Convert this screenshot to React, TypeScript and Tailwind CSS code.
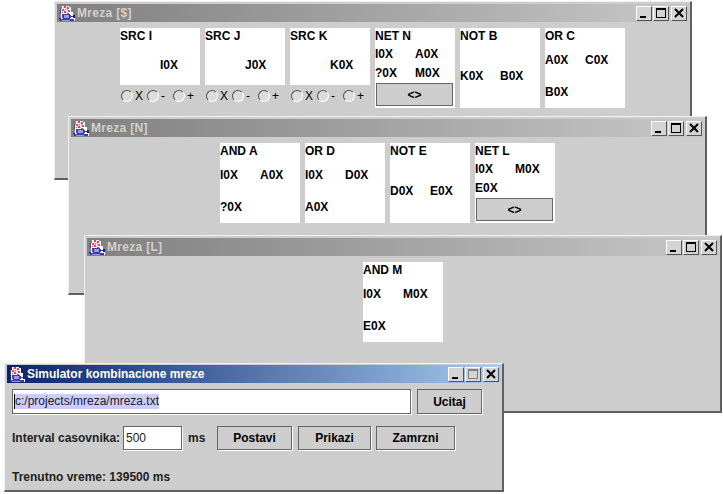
import type { ReactNode } from 'react';

function JavaIcon() {
  return (
    <svg width="16" height="17" viewBox="0 0 16 17" shapeRendering="crispEdges" className="shrink-0">
      <path d="M3 1h7v1h2v5h2v4h2v5H1v-3h1V9H1V4h2z" fill="#fff" />
      <path d="M5 1h2v2H5zM8 2h2v2H8zM3 4h2v2H3zM6 4h1v1H6zM9 5h2v2H9zM5 6h2v2H5zM3 7h1v1H3zM8 8h2v1H8z" fill="#e8405a" />
      <path d="M7 3h1v1H7zM5 5h1v1H5zM8 4h1v2H8zM7 7h1v1H7zM4 2h1v1H4z" fill="#f4a6b4" />
      <path d="M1 4h1v5H1zM3 9h8v1h1v1h2v1h-2v1h-1v1H4v-1H3zM1 14h14v2H1z" fill="#3a3fa8" />
      <path d="M5 10h5v3H5zM3 15h8v1H3z" fill="#9a9ce0" />
      <path d="M0 13h2v1H0zM14 10h2v3h-2z" fill="#1c1f78" />
    </svg>
  );
}

function TitleButton({ kind, muted }: { kind: 'min' | 'max' | 'close'; muted?: boolean }) {
  const stroke = muted ? '#808080' : '#000';
  return (
    <div className="w-4 h-[15px] flex items-center justify-center bg-[#d4d4d4] border-t border-l border-t-white border-l-white border-r border-b border-r-[#555] border-b-[#555]">
      <svg width="12" height="11" viewBox="0 0 12 11" shapeRendering="crispEdges">
        {kind === 'min' && <path d="M2 8h6v2H2z" fill="#000" />}
        {kind === 'max' && <path d="M1 0h10v2H1zM1 2h1v8H1zM10 2h1v8h-1zM1 9h10v1H1z" fill={stroke} />}
        {kind === 'close' && (
          <path d="M2 1l8 8M10 1l-8 8" stroke="#000" strokeWidth="2" fill="none" shapeRendering="auto" />
        )}
      </svg>
    </div>
  );
}

function Window({
  title,
  active,
  className,
  children,
}: {
  title: string;
  active?: boolean;
  className: string;
  children: ReactNode;
}) {
  return (
    <div
      className={`absolute flex flex-col bg-[#cdcdcd] border-t border-l border-t-[#f0f0f0] border-l-[#f0f0f0] border-r-2 border-b-2 border-r-[#606060] border-b-[#606060] pl-[2px] pr-px ${
        active ? 'pt-px' : 'pt-[2px]'
      } ${className}`}
    >
      <div
        className={`h-[18px] shrink-0 flex items-center pl-[2px] pr-[2px] ${
          active
            ? 'bg-gradient-to-r from-[#0a246a] to-[#a6caf0] text-white'
            : 'bg-gradient-to-r from-[#808080] to-[#c8c8c8] text-[#d4d0c8] tracking-[0.3px]'
        }`}
      >
        <JavaIcon />
        <span className="ml-[2px] text-[12px] font-bold leading-none whitespace-nowrap">{title}</span>
        <div className="ml-auto flex items-center">
          <TitleButton kind="min" />
          <div className="ml-px">
            <TitleButton kind="max" muted={active} />
          </div>
          <div className="ml-[2px]">
            <TitleButton kind="close" />
          </div>
        </div>
      </div>
      {children}
    </div>
  );
}

function Pin({ children }: { children?: ReactNode }) {
  return <span className="w-10 whitespace-nowrap text-[12px] font-bold leading-none text-black">{children}</span>;
}

function Rows({ rows, rowClass }: { rows: [string, string][]; rowClass: string }) {
  return (
    <>
      {rows.map(([a, b], i) => (
        <div key={i} className={`flex items-center ${rowClass}`}>
          <Pin>{a}</Pin>
          <Pin>{b}</Pin>
        </div>
      ))}
    </>
  );
}

function Cell({ title, children, className = 'h-20' }: { title: string; children?: ReactNode; className?: string }) {
  return (
    <div className={`w-20 bg-white flex flex-col ${className}`}>
      <div className="h-4 flex items-center text-[12px] font-bold leading-none text-black whitespace-nowrap">{title}</div>
      {children}
    </div>
  );
}

function MetalButton({ label, className }: { label: string; className: string }) {
  return (
    <button className={`flex items-center justify-center bg-[#cdcdcd] border border-[#666] shadow-[1px_1px_0_#fff] text-[12px] font-bold text-black ${className}`}>
      {label}
    </button>
  );
}

function NetCell({ title, rows }: { title: string; rows: [string, string][] }) {
  return (
    <Cell title={title}>
      <Rows rows={rows} rowClass="h-[19px]" />
      <div className="mt-px mx-px">
        <MetalButton label="<>" className="w-[77px] h-[23px]" />
      </div>
    </Cell>
  );
}

function Radio({ label }: { label: string }) {
  return (
    <div className="w-[26px] flex items-center">
      <span className="w-3 h-3 rounded-full bg-[#dcdcdc] border border-t-[#505050] border-l-[#505050] border-r-white border-b-white" />
      <span className="ml-[2px] text-[12px] leading-none text-black">{label}</span>
    </div>
  );
}

function SrcCell({ title, pin }: { title: string; pin: string }) {
  return (
    <div className="w-20 h-20 flex flex-col">
      <Cell title={title} className="h-[57px]">
        <div className="h-[41px] flex items-center">
          <Pin />
          <Pin>{pin}</Pin>
        </div>
      </Cell>
      <div className="flex-1 flex items-center pl-px pb-px">
        <Radio label="X" />
        <Radio label="-" />
        <Radio label="+" />
      </div>
    </div>
  );
}

export default function App() {
  return (
    <div className="relative w-[723px] h-[494px] overflow-hidden bg-white font-['Liberation_Sans',Arial,sans-serif]">
      <Window title="Mreza [$]" className="left-[54px] top-[1px] w-[638px] h-[179px]">
        <div className="flex justify-center gap-[5px] pt-[6px] pr-px">
          <SrcCell title="SRC I" pin="I0X" />
          <SrcCell title="SRC J" pin="J0X" />
          <SrcCell title="SRC K" pin="K0X" />
          <NetCell
            title="NET N"
            rows={[
              ['I0X', 'A0X'],
              ['?0X', 'M0X'],
            ]}
          />
          <Cell title="NOT B">
            <Rows rows={[['K0X', 'B0X']]} rowClass="h-16" />
          </Cell>
          <Cell title="OR C">
            <Rows
              rows={[
                ['A0X', 'C0X'],
                ['B0X', ''],
              ]}
              rowClass="h-8"
            />
          </Cell>
        </div>
      </Window>

      <Window title="Mreza [N]" className="left-[68px] top-[116px] w-[639px] h-[179px]">
        <div className="flex justify-center gap-[5px] pt-[6px]">
          <Cell title="AND A">
            <Rows
              rows={[
                ['I0X', 'A0X'],
                ['?0X', ''],
              ]}
              rowClass="h-8"
            />
          </Cell>
          <Cell title="OR D">
            <Rows
              rows={[
                ['I0X', 'D0X'],
                ['A0X', ''],
              ]}
              rowClass="h-8"
            />
          </Cell>
          <Cell title="NOT E">
            <Rows rows={[['D0X', 'E0X']]} rowClass="h-16" />
          </Cell>
          <NetCell
            title="NET L"
            rows={[
              ['I0X', 'M0X'],
              ['E0X', ''],
            ]}
          />
        </div>
      </Window>

      <Window title="Mreza [L]" className="left-[84px] top-[235px] w-[638px] h-[178px]">
        <div className="flex justify-center pt-[6px]">
          <Cell title="AND M">
            <Rows
              rows={[
                ['I0X', 'M0X'],
                ['E0X', ''],
              ]}
              rowClass="h-8"
            />
          </Cell>
        </div>
      </Window>

      <Window title="Simulator kombinacione mreze" active className="left-[4px] top-[363px] w-[500px] h-[129px]">
        <div className="flex flex-col pl-[5px] pt-[6px]">
          <div className="flex items-center gap-[6px]">
            <div className="w-[399px] h-[25px] flex items-center bg-white border border-[#666] shadow-[1px_1px_0_#fff] pl-px">
              <span className="bg-[#ccccff] border-l border-l-black text-[12px] leading-[15px] text-[#222] whitespace-nowrap">
                c:/projects/mreza/mreza.txt
              </span>
            </div>
            <MetalButton label="Ucitaj" className="w-[65px] h-[25px]" />
          </div>
          <div className="flex items-center mt-3 h-6">
            <span className="w-[111px] text-[12px] font-bold text-[#222] whitespace-nowrap">Interval casovnika:</span>
            <div className="w-[59px] h-6 flex items-center bg-white border border-[#666] shadow-[1px_1px_0_#fff] pl-[2px] text-[12px] text-[#222]">
              500
            </div>
            <span className="ml-[6px] w-[29px] text-[12px] font-bold text-[#222]">ms</span>
            <MetalButton label="Postavi" className="w-[75px] h-6" />
            <MetalButton label="Prikazi" className="ml-[6px] w-[73px] h-6" />
            <MetalButton label="Zamrzni" className="ml-[5px] w-[79px] h-6" />
          </div>
          <div className="mt-[21px] text-[12px] font-bold leading-none text-[#222] whitespace-nowrap">
            Trenutno vreme: 139500 ms
          </div>
        </div>
      </Window>
    </div>
  );
}
